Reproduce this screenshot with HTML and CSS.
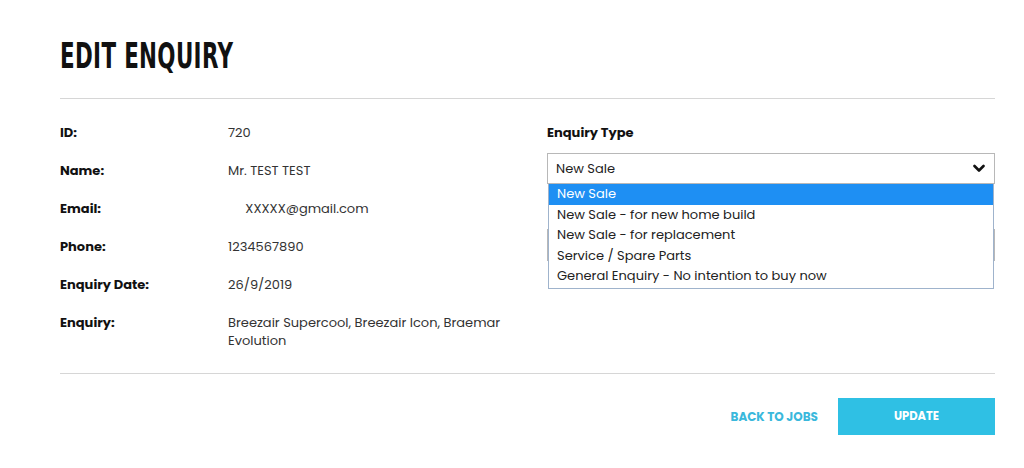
FILE: index.html
```html
<!DOCTYPE html>
<html lang="en">
<head>
    <meta charset="UTF-8">
    <meta name="viewport" content="width=device-width, initial-scale=1.0">
    <title>Edit Enquiry</title>
    <link rel="stylesheet" href="styles.css">
</head>
<body>
    <div class="page">
        <h1 class="title"><span>EDIT ENQUIRY</span></h1>

        <div class="form-body">
            <!-- 고객 정보 -->
            <div class="details">
                <div class="label">ID:</div>
                <div class="value">720</div>
                <div class="label">Name:</div>
                <div class="value">Mr. TEST TEST</div>
                <div class="label">Email:</div>
                <div class="value">&nbsp;&nbsp;&nbsp;&nbsp;&nbsp;XXXXX@gmail.com</div>
                <div class="label">Phone:</div>
                <div class="value">1234567890</div>
                <div class="label">Enquiry Date:</div>
                <div class="value">26/9/2019</div>
                <div class="label">Enquiry:</div>
                <div class="value">Breezair Supercool, Breezair Icon, Braemar Evolution</div>
            </div>

            <!-- 문의 유형 -->
            <div class="fields">
                <div class="field-label">Enquiry Type</div>
                <div class="select-wrap">
                    <div class="select-box">
                        <span>New Sale</span>
                        <svg class="chevron" width="12" height="9" viewBox="0 0 12 9">
                            <path d="M1.5 2 L6 6.5 L10.5 2" fill="none" stroke="#111" stroke-width="2.6" stroke-linecap="round" stroke-linejoin="round"/>
                        </svg>
                    </div>
                    <ul class="options">
                        <li class="selected">New Sale</li>
                        <li>New Sale - for new home build</li>
                        <li>New Sale - for replacement</li>
                        <li>Service / Spare Parts</li>
                        <li>General Enquiry - No intention to buy now</li>
                    </ul>
                </div>
                <div class="select-box hidden-box"></div>
            </div>
        </div>

        <div class="actions">
            <a href="#" class="back-link">BACK TO JOBS</a>
            <button class="update-btn">UPDATE</button>
        </div>
    </div>
</body>
</html>
```

FILE: styles.css
```css
/* 기본 스타일 */
body {
    font-family: "Poppins", Inter, "Open Sans", sans-serif;
    margin: 0;
    padding: 0;
    background-color: #fff;
    color: #222;
}
.page {
    width: 935px;
    margin-left: 60px;
    padding-top: 35px;
}
.title {
    margin: 0;
    font-family: "Liberation Sans Narrow", "DejaVu Sans Condensed", sans-serif;
    font-stretch: condensed;
    font-weight: bold;
    font-size: 35px;
    line-height: 42px;
    color: #111;
    letter-spacing: 0.5px;
    padding-bottom: 21px;
    border-bottom: 1px solid #d6d6d6;
}
.title span {
    display: inline-block;
    transform: scaleX(0.68);
    transform-origin: left center;
}
.form-body {
    display: grid;
    grid-template-columns: 487px 448px;
    padding-top: 25px;
    padding-bottom: 23px;
    border-bottom: 1px solid #d6d6d6;
}
.details {
    display: grid;
    grid-template-columns: 168px 280px;
    row-gap: 20px;
    font-size: 13px;
    line-height: 18px;
}
.label {
    font-weight: bold;
    color: #111;
}
.value {
    color: #333;
}
.fields {
    position: relative;
}
.field-label {
    font-weight: bold;
    font-size: 13px;
    line-height: 18px;
    color: #111;
    margin-bottom: 11px;
}
.select-wrap {
    position: relative;
}
.select-box {
    display: flex;
    justify-content: space-between;
    align-items: center;
    height: 29px;
    border: 1px solid #b8b8b8;
    padding: 0 9px 0 8px;
    font-size: 13px;
    color: #222;
}
.hidden-box {
    height: 30px;
    margin-top: 45px;
}
.chevron {
    display: block;
}
.options {
    position: absolute;
    top: 31px;
    left: 1px;
    right: 1px;
    margin: 0;
    padding: 0 0 1px 0;
    list-style: none;
    background-color: #fff;
    border: 1px solid #9fb3cc;
    border-top: none;
    z-index: 10;
}
.options li {
    height: 20.5px;
    line-height: 20.5px;
    padding-left: 8px;
    font-size: 13px;
    color: #222;
}
.options li.selected {
    background-color: #1e8ff3;
    color: #fff;
}
.actions {
    display: flex;
    justify-content: flex-end;
    align-items: center;
    gap: 20px;
    padding-top: 24px;
}
.back-link {
    text-decoration: none;
    color: #3ab8dc;
    font-weight: bold;
    font-size: 12px;
}
.update-btn {
    width: 157px;
    height: 37px;
    border: none;
    background-color: #2fc0e4;
    color: #fff;
    font-family: inherit;
    font-weight: bold;
    font-size: 11.5px;
    cursor: pointer;
}
```
